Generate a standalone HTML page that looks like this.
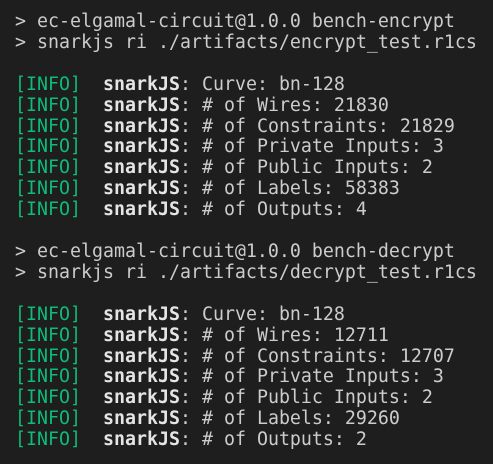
<!DOCTYPE html>
<html><head><meta charset="utf-8"><style>
html,body{margin:0;padding:0;background:#1e1e1e;width:493px;height:464px;overflow:hidden}
pre{margin:0;padding:12px 0 0 15px;font-family:"DejaVu Sans Mono","Liberation Mono",monospace;font-size:18.27px;line-height:20.9px;color:#cccccc}
.g{color:#0dbc79}
b{color:#e5e5e5;font-weight:bold}
</style></head><body><pre>&gt; ec-elgamal-circuit@1.0.0 bench-encrypt
&gt; snarkjs ri ./artifacts/encrypt_test.r1cs

<span class="g">[INFO]</span>  <b>snarkJS</b>: Curve: bn-128
<span class="g">[INFO]</span>  <b>snarkJS</b>: # of Wires: 21830
<span class="g">[INFO]</span>  <b>snarkJS</b>: # of Constraints: 21829
<span class="g">[INFO]</span>  <b>snarkJS</b>: # of Private Inputs: 3
<span class="g">[INFO]</span>  <b>snarkJS</b>: # of Public Inputs: 2
<span class="g">[INFO]</span>  <b>snarkJS</b>: # of Labels: 58383
<span class="g">[INFO]</span>  <b>snarkJS</b>: # of Outputs: 4

&gt; ec-elgamal-circuit@1.0.0 bench-decrypt
&gt; snarkjs ri ./artifacts/decrypt_test.r1cs

<span class="g">[INFO]</span>  <b>snarkJS</b>: Curve: bn-128
<span class="g">[INFO]</span>  <b>snarkJS</b>: # of Wires: 12711
<span class="g">[INFO]</span>  <b>snarkJS</b>: # of Constraints: 12707
<span class="g">[INFO]</span>  <b>snarkJS</b>: # of Private Inputs: 3
<span class="g">[INFO]</span>  <b>snarkJS</b>: # of Public Inputs: 2
<span class="g">[INFO]</span>  <b>snarkJS</b>: # of Labels: 29260
<span class="g">[INFO]</span>  <b>snarkJS</b>: # of Outputs: 2</pre></body></html>
